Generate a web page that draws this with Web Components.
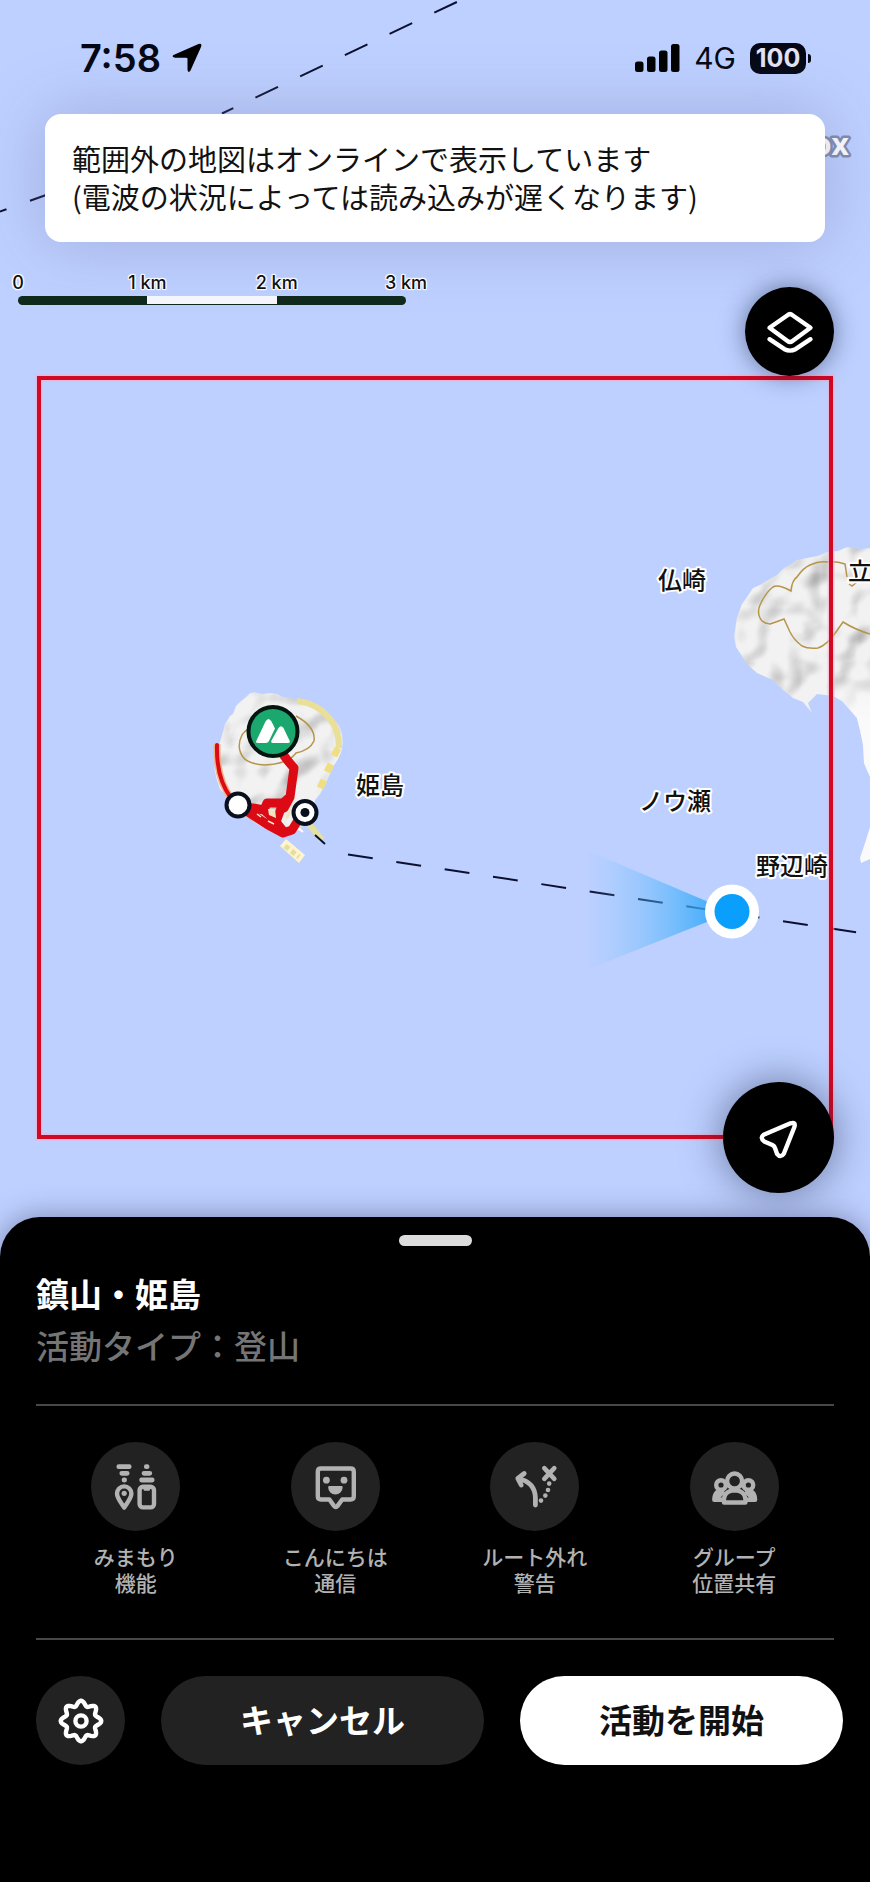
<!DOCTYPE html>
<html lang="ja">
<head>
<meta charset="utf-8">
<meta name="viewport" content="width=device-width, initial-scale=1">
<title>鎮山・姫島</title>
<style>
  html, body{ margin:0; height:100%; background:#000; }
  body{
    font-family:Inter,"Noto Sans CJK JP",sans-serif;
    --sea:#bdd0ff;
    --jp:"Noto Sans CJK JP",sans-serif;
  }
</style>
</head>
<body>

<trek-screen>
  <map-canvas slot="map"></map-canvas>
  <status-bar slot="top" time="7:58" network="4G" battery="100"></status-bar>
  <map-notice slot="top">範囲外の地図はオンラインで表示しています<br>(電波の状況によっては読み込みが遅くなります)</map-notice>
  <map-scale slot="tools"></map-scale>
  <round-button slot="tools" class="layers" icon="layers" label="地図レイヤー" tone="black"></round-button>
  <round-button slot="fab" icon="navigate" label="現在地" tone="black" size="lg"></round-button>

  <bottom-sheet slot="sheet">
    <span slot="title">鎮山・姫島</span>
    <span slot="type">活動タイプ：登山</span>
    <sheet-feature slot="features" icon="watch">みまもり<br>機能</sheet-feature>
    <sheet-feature slot="features" icon="hello">こんにちは<br>通信</sheet-feature>
    <sheet-feature slot="features" icon="route">ルート外れ<br>警告</sheet-feature>
    <sheet-feature slot="features" icon="group">グループ<br>位置共有</sheet-feature>
    <round-button slot="actions" icon="gear" label="設定"></round-button>
    <pill-button slot="actions">キャンセル</pill-button>
    <pill-button slot="actions" tone="white">活動を開始</pill-button>
  </bottom-sheet>
</trek-screen>

<script>
(function(){

  // 歯車の輪郭（歯 8 枚）
  function gearPath(){
    const pts = [];
    for (let i = 0; i < 96; i++){
      const a = i / 96 * Math.PI * 2;
      const r = 17.8 + 2.5 * Math.cos(a * 8);
      pts.push((24 + r * Math.sin(a)).toFixed(2) + ' ' + (24 - r * Math.cos(a)).toFixed(2));
    }
    return 'M' + pts.join('L') + 'z';
  }

  // アイコンは全部 48x48
  const ICONS = {
    layers: `
      <path d="M21.5 7.2Q24 5 26.5 7.2L44.5 19.8 26.5 33Q24 35 21.5 33L3.5 19.8z"/>
      <path d="M3.5 31.2 18.5 41.2Q24 44 29.5 41.2L44.5 31.2"/>`,
    navigate: `
      <path d="M8.7 20.7 35.5 9.3Q41 7.5 39.4 13L28.8 39.8Q25.6 44.4 22 39.8L20 34Q19.4 32 17.4 31L9.2 27.4Q4.6 23.6 8.7 20.7z"/>`,
    gear: `<path d="${gearPath()}"/><circle cx="24" cy="24" r="5.6"/>`,
    watch: `
      <path d="M6.8 3.7h10.4M9.8 10.3h5.4M12 17h.6M34.3 3.7h.8M32 10.3h5.8M29.6 17h10.6" stroke-width="4.8"/>
      <path d="M12.2 44.6C8.8 39.4 5 35 5 30.6a7.2 7.2 0 0 1 14.4 0C19.4 35 15.6 39.4 12.2 44.6z"/>
      <circle cx="12.2" cy="30.3" r="2.6" class="fill"/>
      <rect x="27.6" y="23.8" width="14.4" height="20.6" rx="3.4"/>
      <path d="M32.8 26.4h4" stroke-width="2.6"/>`,
    hello: `
      <path d="M10 5.5h29.6q3.2 0 3.2 3.2v24.6q0 3.2-3.2 3.2h-8.4l-4.6 6.4q-1.8 2.2-3.6 0l-4.6-6.4H10q-3.2 0-3.2-3.2V8.7q0-3.2 3.2-3.2z"/>
      <circle cx="15.4" cy="17.2" r="3.4" class="fill"/>
      <circle cx="33" cy="17.2" r="3.4" class="fill"/>
      <path class="fill" d="M18.2 23h12.4q1.2 0 1 1.4a7.2 7.2 0 0 1-14.4 0q-.2-1.400 1-1.400z"/>`,
    route: `
      <path d="M24.4 42V35Q24 19 7 15.5M13.2 10.5 6.8 15.400 10.2 22" stroke-width="4.8"/>
      <path d="m33.3 5.2 10 10.6m0-10.6-10 10.6" stroke-width="4.6"/>
      <g class="fill"><circle cx="38.2" cy="20.6" r="2.3"/><circle cx="37" cy="27" r="2.3"/><circle cx="34.3" cy="32.6" r="2.3"/><circle cx="30" cy="37.6" r="2.3"/></g>`,
    group: `
      <circle cx="24.6" cy="18" r="7.5"/>
      <circle cx="11" cy="22" r="4.8"/>
      <circle cx="38.4" cy="22" r="4.8"/>
      <path d="M8.4 28.5Q4.3 30.5 4.3 36.8H12M41 28.5Q45.1 30.5 45.1 36.8H37.4M8.5 33.5 12.6 29.5M40.9 33.5 36.8 29.5"/>
      <path d="M14 39.5Q13 27.8 24.7 27.3 36.4 27.8 35.4 39.5z"/>`
  };

  function icon(name){
    return `<svg viewBox="0 0 48 48" aria-hidden="true">${ICONS[name] || ''}</svg>`;
  }

  const ICON_CSS = `
    svg{
      width:48px; height:48px; display:block; overflow:visible;
      fill:none; stroke:currentColor; stroke-width:4.4;
      stroke-linecap:round; stroke-linejoin:round;
    }
    svg .fill{ fill:currentColor; stroke:none; }
  `;

  function define(name, render){
    if (customElements.get(name)) return;
    customElements.define(name, class extends HTMLElement {
      constructor(){
        super();
        this.attachShadow({mode:'open'});
      }
      connectedCallback(){
        this.shadowRoot.innerHTML = render(this);
      }
    });
  }

  // ── 画面全体 ──
  define('trek-screen', () => `
    <style>
      :host{
        display:flex; flex-direction:column; position:relative;
        min-height:100vh; overflow:hidden; background:var(--sea);
      }
      .map{ position:absolute; inset:0; }
      .over{ position:relative; flex:1; display:flex; flex-direction:column; }
      .tools{
        display:flex; justify-content:space-between; align-items:flex-start;
        padding:31px 36px 0 18px;
      }
      .fab{ margin-top:auto; padding:24px 36px; display:flex; justify-content:flex-end; }
      ::slotted(.layers){ margin-top:14px; }
    </style>
    <div class="map"><slot name="map"></slot></div>
    <div class="over">
      <slot name="top"></slot>
      <div class="tools"><slot name="tools"></slot></div>
      <div class="fab"><slot name="fab"></slot></div>
    </div>
    <slot name="sheet"></slot>
  `);

  // ── 地図 ──
  define('map-canvas', () => `
    <style>
      :host{ display:block; }
      svg{ display:block; width:100%; height:auto; }
      .name{
        font:500 24px var(--jp); fill:#111;
        stroke:#fff; stroke-width:4; stroke-linejoin:round; paint-order:stroke;
      }
      .logo{
        font:700 30px "Open Sans",sans-serif; fill:#fff;
        stroke:#7f8bad; stroke-width:5; stroke-linejoin:round; paint-order:stroke;
      }
      .ferry{ fill:none; stroke:#0b1030; stroke-width:2; }
      .contour{ fill:none; stroke:#b5954a; stroke-width:1.5; }
      .track{ fill:none; stroke:#dc0a14; stroke-linejoin:round; stroke-linecap:round; }
    </style>
    <svg viewBox="0 0 870 1290" role="img" aria-label="地図">
      <defs>
        <filter id="relief" x="0" y="0" width="100%" height="100%" color-interpolation-filters="sRGB">
          <feTurbulence type="fractalNoise" baseFrequency="0.028" numOctaves="2" seed="7"/>
          <feColorMatrix values="0 0 0 0 0  0 0 0 0 0  0 0 0 0 0  1 0 0 0 0"/>
          <feDiffuseLighting surfaceScale="9" diffuseConstant="1.15" lighting-color="#fff">
            <feDistantLight azimuth="225" elevation="58"/>
          </feDiffuseLighting>
          <feColorMatrix values=".5 0 0 0 .45  0 .5 0 0 .45  0 0 .5 0 .45  0 0 0 0 1"/>
          <feGaussianBlur stdDeviation="1"/>
          <feComposite in2="SourceGraphic" operator="in"/>
        </filter>
        <linearGradient id="beam" gradientUnits="userSpaceOnUse" x1="586" y1="0" x2="712" y2="0">
          <stop offset="0" stop-color="#7cc4ff" stop-opacity="0"/>
          <stop offset="1" stop-color="#2fa8f8"/>
        </linearGradient>
        <linearGradient id="fade" gradientUnits="userSpaceOnUse" x1="0" y1="670" x2="0" y2="720">
          <stop offset="0" stop-color="#fafafa" stop-opacity="0"/>
          <stop offset="1" stop-color="#fafafa"/>
        </linearGradient>
      </defs>
      <rect width="870" height="1290" fill="#bdd0ff"/>

      <!-- 航路 -->
      <path class="ferry" d="M222 113.5 480-9" stroke-dasharray="25 24.5" stroke-dashoffset="12.5"/>
      <path class="ferry" d="M-18 218 60 190" stroke-dasharray="26 25"/>

      <!-- 半島 -->
      <path filter="url(#relief)" d="M880 546 870 548 858 549 847 547 838 551 827 552 818 556 807 558 797 560 790 565 784 568 777 575 768 580 760 585 753 588 747 597 742 604 737 617 734 637 736 647 740 653 747 664 757 673 773 680 783 690 793 698 803 702 812 713 808 703 817 694 833 696 842 701 850 710 857 718 860 730 863 745 864 763 870 777 880 785z"/>
      <path fill="url(#fade)" d="M833 696 842 701 850 710 857 718 860 730 863 745 864 763 870 777V670H820z"/>
      <path fill="#fafafa" d="M870 827 866 840 860 858 861 863 870 859z"/>
      <path class="contour" d="M870 634Q856 630 843 622L836 632Q827 645 818 648 808 649 802 646 794 640 790 632L784 619Q776 622 770 624 762 623 760 618 757 612 760 605 766 592 773 587 778 584 791 591 792 580 797 577 803 568 810 565 819 561 827 562 836 561 845 564L847 577M849 584 852 586 857 582"/>

      <!-- 姫島 -->
      <path filter="url(#relief)" d="M240 702 246 697 250 693 255 692 262 694 270 693 277 694 283 697 291 698 300 701 317 705 326 710 333 718 339 725 342 733 343 742 342 750 338 759 333 767 329 776 325 785 320 794 315 800 310 818 300 830 283 837 266 829 250 820 237 809 227 797 220 789 217 780 214 768 215 757 220 742 222 735 224 728 225 724 230 716 233 714 236 706z"/>
      <path d="M297 701Q317 703 330 719 339 730 339 748" fill="none" stroke="#eadf96" stroke-width="6"/>
      <path d="M338 748 334 756M331 764 327 772M324 780 320 788" fill="none" stroke="#f0df82" stroke-width="7"/>
      <path d="M280 846 286 839 305 855 299 863z" fill="#fff4cf"/>
      <path d="M285 846 299 857" stroke="#e6df9c" stroke-width="5" stroke-dasharray="5 3"/>
      <path d="M309 824 322 840" stroke="#e4e0a0" stroke-width="6"/>
      <path d="M298 828 303 832" stroke="#fff" stroke-width="2"/>
      <path class="contour" d="M296 716Q316 727 314 741 310 750 296 753 288 764 265 765 248 764 243 757 236 747 242 735 247 728 252 728"/>
      <path d="M217 744Q216 780 232 799" fill="none" stroke="#f4b183" stroke-width="7"/>
      <path class="track" d="M217 745Q216 778 231 798" stroke-width="4"/>
      <path class="track" d="M279 749 288 761 294 768 290 797 283 803 267 803 264 810 253 808 241 807M248 812 268 825 283 833 292 830 300 817M283 803 276 822 284 832M290 797 284 808M267 803 264 810 277 822" stroke-width="9"/>
      <path d="M268 809 275 809 276 818 269 815zM286 815 291 808 290 816 286 820z" fill="#f1e5c0"/>
      <path d="M257 814 261 817M268 821 274 824" stroke="#fff0c0" stroke-width="1.5"/>
      <circle cx="238" cy="805" r="11.5" fill="#fff" stroke="#0a0f1e" stroke-width="4"/>
      <circle cx="305" cy="812.5" r="11.5" fill="#fff" stroke="#0a0f1e" stroke-width="4"/>
      <circle cx="305" cy="812.5" r="4.5" fill="#0a0f1e"/>
      <circle cx="273" cy="731.5" r="24.5" fill="#1aa86e" stroke="#06140f" stroke-width="4"/>
      <path d="M258 743Q255 743 256.500 740.500L265.500 721.500Q268.500 716.500 271.500 721.500L275 728.500 269 741Q268 743 266 743z" fill="#fff"/>
      <path d="M273 743Q270.500 743 271.500 740.500L278.500 728Q281 724.500 283.500 728L289.500 740.500Q290.500 743 288 743z" fill="#fff"/>
      <path class="ferry" d="M315 835 325 844"/>

      <!-- 現在地 -->
      <path class="ferry" d="M348 854.500 857 932.500" stroke-dasharray="25 23.9"/>
      <path d="M732 912 586 850V970z" fill="url(#beam)" fill-opacity=".85"/>
      <circle cx="732" cy="911.5" r="27" fill="#fff"/>
      <circle cx="732" cy="911.5" r="17.5" fill="#0a9ffc"/>

      <text class="name" x="356" y="794">姫島</text>
      <text class="name" x="658" y="589">仏崎</text>
      <text class="name" x="848" y="580">立</text>
      <text class="name" x="639" y="810">ノウ瀬</text>
      <text class="name" x="756" y="875">野辺崎</text>
      <text class="logo" x="813" y="155">ox</text>

      <rect x="39" y="378" width="792" height="759" fill="none" stroke="#ffa9c4" stroke-width="7" stroke-opacity=".6"/>
      <rect x="39" y="378" width="792" height="759" fill="none" stroke="#d00a24" stroke-width="4"/>
    </svg>
  `);

  // ── ステータスバー ──
  define('status-bar', el => `
    <style>
      :host{
        display:flex; align-items:center; justify-content:space-between;
        height:114px; padding:2px 59px 0 80px; box-sizing:border-box; color:#050814;
      }
      .side{ display:flex; align-items:center; gap:14px; }
      .left{ gap:11px; }
      .time{ font-size:38px; font-weight:600; line-height:40px; }
      .net{ font-size:30px; font-weight:400; line-height:32px; }
      .arrow{ width:30px; height:30px; }
      .bars{ width:45px; height:28px; }
      .batt{ display:flex; align-items:center; gap:2px; }
      .cell{
        width:56px; height:31px; border-radius:10px; background:#050814;
        color:#e4e2f6; font-size:25px; font-weight:700; line-height:31px; text-align:center;
      }
      .nub{ width:3px; height:9px; border-radius:0 3px 3px 0; background:#050814; }
    </style>
    <div class="side left">
      <span class="time">${el.getAttribute('time')}</span>
      <svg class="arrow" viewBox="0 0 30 30" aria-hidden="true"><path d="M1.5 12 26.5 1Q30.500 0 29 4L18.500 27.500Q16.500 30.500 15.500 27V16Q15.500 14.800 14 14.800H3Q-1 14 1.500 12z"/></svg>
    </div>
    <div class="side">
      <svg class="bars" viewBox="0 0 45 28" aria-hidden="true">
        <rect y="17.5" width="8.5" height="10.5" rx="2.5"/>
        <rect x="12" y="12.5" width="8.5" height="15.5" rx="2.5"/>
        <rect x="24" y="6.5" width="8.5" height="21.5" rx="2.5"/>
        <rect x="36" width="8.5" height="28" rx="2.5"/>
      </svg>
      <span class="net">${el.getAttribute('network')}</span>
      <span class="batt"><span class="cell">${el.getAttribute('battery')}</span><span class="nub"></span></span>
    </div>
  `);

  // ── お知らせ ──
  define('map-notice', () => `
    <style>
      :host{
        display:block; margin:0 45px; padding:25px 27px 27px;
        border-radius:16px; background:#fff; color:#111;
        font:400 29px/38px var(--jp);
        box-shadow:0 0 64px rgba(120,120,170,.4);
      }
    </style>
    <slot></slot>
  `);

  // ── 縮尺 ──
  define('map-scale', () => `
    <style>
      :host{ display:block; width:388px; color:#111; }
      .ticks{ display:flex; justify-content:space-between; height:23px; }
      .ticks span{
        display:flex; justify-content:center; width:0; white-space:nowrap;
        font-size:18px; font-weight:500; line-height:20px;
        text-shadow:0 0 2px #fff,0 0 2px #fff,1px 1px 1px #fff,-1px -1px 1px #fff,1px -1px 1px #fff,-1px 1px 1px #fff;
      }
      .bar{
        display:flex; height:9px; border-radius:5px; overflow:hidden;
        background:#0f2a1c;
      }
      .bar i{ flex:1; }
      .bar i:nth-child(2){ background:#f4f6fc; margin-bottom:1px; }
    </style>
    <div class="ticks"><span>0</span><span>1 km</span><span>2 km</span><span>3 km</span></div>
    <div class="bar"><i></i><i></i><i></i></div>
  `);

  // ── 丸ボタン ──
  define('round-button', el => `
    <style>
      :host{ display:block; flex:none; }
      button{
        display:flex; align-items:center; justify-content:center;
        width:89px; height:89px; padding:0; border:0; border-radius:50%;
        background:#222; color:#fff; cursor:pointer;
      }
      :host([tone="black"]) button{ background:#000; box-shadow:0 0 24px rgba(20,25,60,.5); }
      :host([size="lg"]) button{ width:111px; height:111px; box-shadow:0 0 40px rgba(20,25,60,.5); }
      ${ICON_CSS}
    </style>
    <button type="button" aria-label="${el.getAttribute('label')}">${icon(el.getAttribute('icon'))}</button>
  `);

  define('pill-button', () => `
    <style>
      :host{ display:block; flex:1; }
      button{
        display:block; width:100%; height:89px; padding:0 0 3px; border:0; border-radius:45px;
        background:#222; color:#fff; cursor:pointer;
        font:700 33px/48px var(--jp);
      }
      :host([tone="white"]) button{ background:#fff; color:#111; }
    </style>
    <button type="button"><slot></slot></button>
  `);

  // ── 機能アイコン ──
  define('sheet-feature', el => `
    <style>
      :host{ display:block; }
      button{
        display:flex; flex-direction:column; align-items:center; gap:12px;
        width:100%; padding:0; border:0; background:none; color:#b2b2b2; cursor:pointer;
        font:500 21px/26px var(--jp);
      }
      .disc{
        display:flex; align-items:center; justify-content:center;
        width:89px; height:89px; border-radius:50%; background:#222;
      }
      ${ICON_CSS}
    </style>
    <button type="button">
      <span class="disc">${icon(el.getAttribute('icon'))}</span>
      <span><slot></slot></span>
    </button>
  `);

  // ── 下部シート ──
  define('bottom-sheet', () => `
    <style>
      :host{
        display:block; position:relative; padding:18px 0 117px;
        border-radius:40px 40px 0 0; background:#000; color:#fff;
        box-shadow:0 0 28px rgba(60,60,100,.5);
      }
      .grip{ width:73px; height:11px; margin:0 auto 23px; border-radius:6px; background:#dcdcdc; }
      h1, p{ margin:0 36px; font:700 33px/48px var(--jp); }
      p{ margin-top:4px; font-weight:500; color:#757575; }
      .features{
        display:grid; grid-template-columns:repeat(4,1fr);
        margin:35px 36px 0; padding:36px 0 43px;
        border:solid #484848; border-width:2px 0;
      }
      .actions{ display:flex; gap:36px; padding:36px 27px 0 36px; }
    </style>
    <div class="grip"></div>
    <h1><slot name="title"></slot></h1>
    <p><slot name="type"></slot></p>
    <div class="features"><slot name="features"></slot></div>
    <div class="actions"><slot name="actions"></slot></div>
  `);
})();
</script>
</body>
</html>
